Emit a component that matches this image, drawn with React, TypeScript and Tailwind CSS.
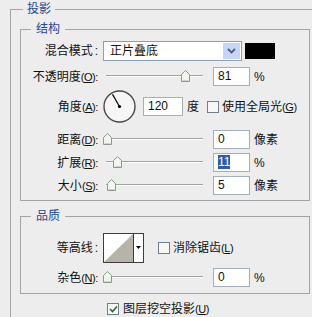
import React from "react";

const font = { fontFamily: '"Liberation Sans", "Noto Sans CJK SC", sans-serif' };

const Key = ({ k, colon = true }: { k: string; colon?: boolean }) => (
  <span className="text-[11px] tracking-[-0.4px]">
    (<span className="underline underline-offset-1">{k}</span>){colon && ":"}
  </span>
);

const Thumb = () => (
  <svg width="9" height="12" viewBox="0 0 9 12">
    <path d="M4.5 0.5 L8.5 4.5 L8.5 11.5 L0.5 11.5 L0.5 4.5 Z" fill="#f1f6ef" stroke="#8d9a8b" strokeWidth="1" />
    <path d="M1.5 10.5 L7.5 10.5" stroke="#c9d6c6" strokeWidth="1" />
  </svg>
);

const Slider = ({ pos }: { pos: number }) => (
  <div className="relative h-full w-[100px] shrink-0">
    <div className="absolute left-[3px] right-0 top-[8px] h-px bg-[#a3a3a3]" />
    <div className="absolute left-[3px] right-0 top-[9px] h-px bg-white" />
    <div className="absolute top-[3px] flex" style={{ left: pos - 4.5 }}>
      <Thumb />
    </div>
  </div>
);

const Field = ({ children, w = "w-[37px]" }: { children: React.ReactNode; w?: string }) => (
  <div className={`${w} h-[19px] shrink-0 border border-[#a2afbd] bg-white pl-[4px] leading-[17px]`}>
    {children}
  </div>
);

const Check = ({ checked }: { checked?: boolean }) => (
  <div className="w-[12px] h-[12px] shrink-0 border border-[#6f7f8f] bg-[#f7f7f5] flex items-center justify-center">
    {checked && (
      <svg width="9" height="8" viewBox="0 0 9 8">
        <path d="M1 4 L3.5 6.5 L8 1.5" fill="none" stroke="#2f6a2f" strokeWidth="1.6" />
      </svg>
    )}
  </div>
);

const Row = ({ label, className, children }: { label: React.ReactNode; className: string; children: React.ReactNode }) => (
  <div className={`flex items-center ${className}`}>
    <span className="w-[77px] shrink-0 text-right whitespace-nowrap">{label}</span>
    <div className="ml-[5px] flex items-center h-full">{children}</div>
  </div>
);

const sliders = [
  { label: "距离", k: "D", pos: 4, value: "0", unit: "像素", mt: "mt-[7px]" },
  { label: "扩展", k: "R", pos: 14, value: "11", unit: "%", mt: "mt-[4px]" },
  { label: "大小", k: "S", pos: 8, value: "5", unit: "像素", mt: "mt-[4px]" },
];

export default function App() {
  return (
    <div style={font} className="w-[312px] h-[317px] overflow-hidden bg-[#ededed] text-[12px] text-[#111]">
      <fieldset className="ml-[10px] mt-[2px] w-[312px] border border-[#a4a4a4] pl-[9px] pb-[20px]">
        <legend className="ml-[3px] px-[4px] leading-[14px] text-[#22489a]">投影</legend>

        {/* 结构 */}
        <fieldset className="mt-[6px] w-[290px] border border-[#a4a4a4] pt-[5px] pb-[5px]">
          <legend className="ml-[10px] px-[5px] leading-[14px] text-[#22489a]">结构</legend>

          <Row label={<>混合模式<span className="ml-[2px]">:</span></>} className="h-[20px]">
            <div className="relative w-[139px] h-[20px] border border-[#8a9fb8] bg-white flex items-center pl-[6px]">
              <span>正片叠底</span>
              <div className="absolute right-[1px] top-[1px] w-[17px] h-[16px] bg-[#c6d5f6] flex items-center justify-center">
                <svg width="9" height="6" viewBox="0 0 9 6">
                  <path d="M1 1 L4.5 4.5 L8 1" fill="none" stroke="#4a5f86" strokeWidth="1.8" />
                </svg>
              </div>
            </div>
            <div className="ml-[3px] w-[30px] h-[16px] bg-black" />
          </Row>

          <Row label={<>不透明度<Key k="O" /></>} className="h-[19px] mt-[6px]">
            <Slider pos={82} />
            <div className="ml-[10px]">
              <Field>81</Field>
            </div>
            <span className="ml-[4px]">%</span>
          </Row>

          <Row label={<>角度<Key k="A" /></>} className="h-[33px] mt-[4px]">
            <svg width="33" height="33" viewBox="0 0 33 33">
              <circle cx="16.5" cy="16.5" r="15.5" fill="#f6f6f6" stroke="#4a4a4a" strokeWidth="1.4" />
              <line x1="16.5" y1="16.5" x2="9.5" y2="4.4" stroke="#111" strokeWidth="1.3" />
              <circle cx="16.5" cy="16.5" r="1.6" fill="#000" />
            </svg>
            <div className="ml-[7px]">
              <Field w="w-[40px]">120</Field>
            </div>
            <span className="ml-[4px]">度</span>
            <div className="ml-[8px]">
              <Check />
            </div>
            <span className="ml-[3px] whitespace-nowrap">
              使用全局光<Key k="G" colon={false} />
            </span>
          </Row>

          {sliders.map((s) => (
            <Row key={s.k} label={<>{s.label}<Key k={s.k} /></>} className={`h-[19px] ${s.mt}`}>
              <Slider pos={s.pos} />
              <div className="ml-[10px]">
                <Field>
                  {s.k === "R" ? <span className="bg-[#2c5cb8] text-white">{s.value}</span> : s.value}
                </Field>
              </div>
              <span className="ml-[4px]">{s.unit}</span>
            </Row>
          ))}
        </fieldset>

        {/* 品质 */}
        <fieldset className="mt-[8px] w-[290px] border border-[#a4a4a4] pt-[10px] pb-[6px]">
          <legend className="ml-[10px] px-[5px] leading-[14px] text-[#22489a]">品质</legend>

          <Row label={<>等高线<span className="ml-[2px]">:</span></>} className="h-[30px]">
            <svg width="41" height="30" viewBox="0 0 41 30">
              <rect x="0.5" y="0.5" width="40" height="29" fill="#fff" stroke="#3d3d3d" />
              <path d="M1 29 L30 1 L30 29 Z" fill="#b6b3a8" />
              <line x1="30.5" y1="1" x2="30.5" y2="29" stroke="#3d3d3d" />
              <path d="M33 13 L38 13 L35.5 16 Z" fill="#000" />
            </svg>
            <div className="ml-[14px]">
              <Check />
            </div>
            <span className="ml-[3px] whitespace-nowrap">
              消除锯齿<Key k="L" colon={false} />
            </span>
          </Row>

          <Row label={<>杂色<Key k="N" /></>} className="h-[19px] mt-[5px]">
            <Slider pos={4} />
            <div className="ml-[10px]">
              <Field>0</Field>
            </div>
            <span className="ml-[4px]">%</span>
          </Row>
        </fieldset>

        <div className="mt-[8px] ml-[87px] flex items-center h-[13px]">
          <Check checked />
          <span className="ml-[4px] whitespace-nowrap">
            图层挖空投影<Key k="U" colon={false} />
          </span>
        </div>
      </fieldset>
    </div>
  );
}
